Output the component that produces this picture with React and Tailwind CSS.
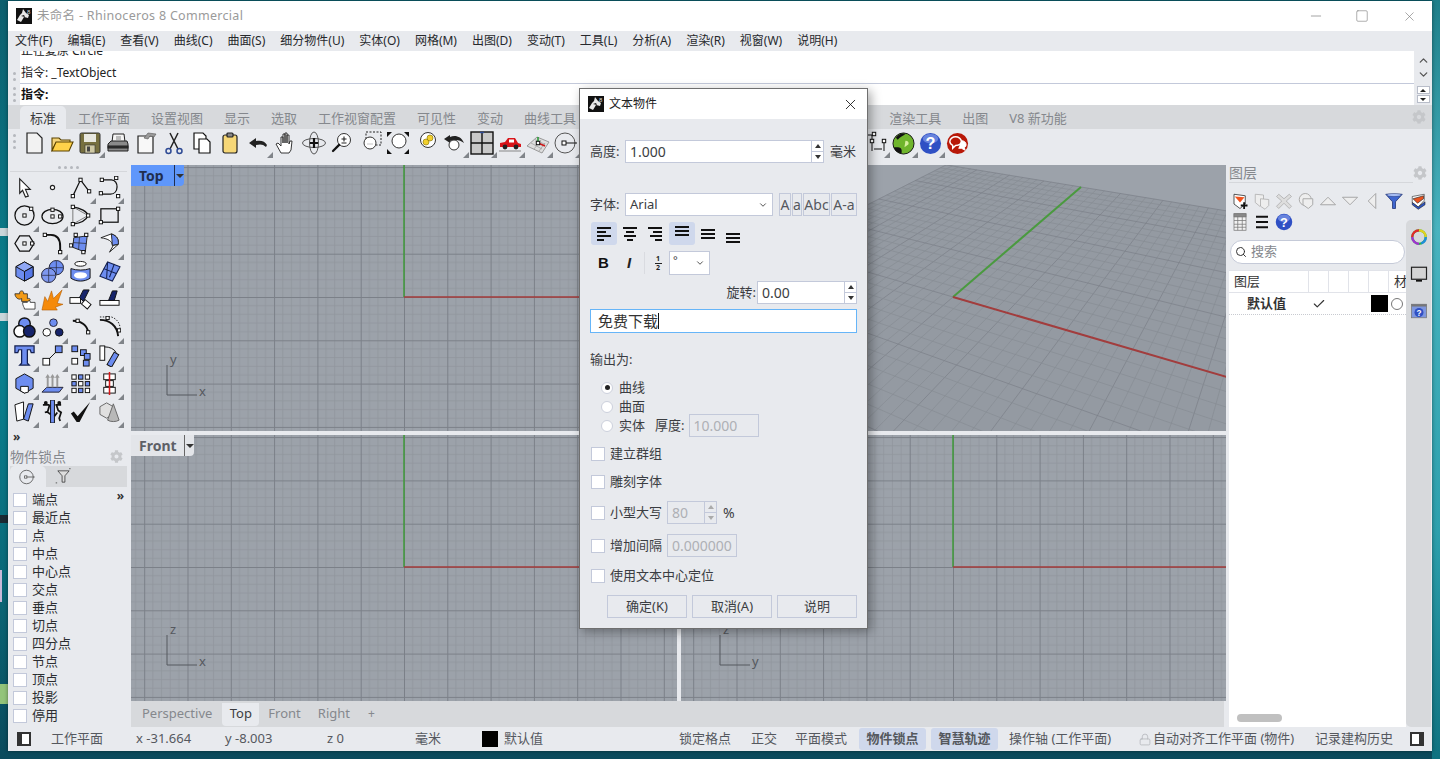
import { Check, ChevronDown, ChevronUp, Lock, Minus, Search, Square, X } from 'lucide-react';
import { FaCog } from 'react-icons/fa';

const S = { fill: 'none', stroke: '#111', strokeWidth: 1.3 };
const BLUE = '#6d8df0';
const NAVY = '#16246b';
const Pt = ({ x, y }) => <rect x={x - 1.7} y={y - 1.7} width="3.4" height="3.4" fill="#fff" stroke="#111" strokeWidth="1" />;
const Lens = ({ cx = 14, cy = 9, r = 6.5, fill = '#fff', dash }) => (
  <g>
    <circle cx={cx} cy={cy} r={r} fill={fill} stroke="#333" strokeWidth="1" strokeDasharray={dash} />
    <path d={`M${cx - r * 0.75} ${cy + r * 0.75}L${cx - r - 4.5} ${cy + r + 4.5}`} stroke="#111" strokeWidth="2.2" strokeLinecap="round" />
  </g>
);

const icons = {
  newDoc: <path d="M5 2h10l5 5v15H5z" fill="#f2f2f2" stroke="#222" strokeWidth="1.2" />,
  open: (
    <g stroke="#5a4300" strokeWidth="1.1">
      <path d="M2 19V7h7l2 2h9v3H6z" fill="#f3d37a" />
      <path d="M2 20l4-9h17l-4 9z" fill="#ffd24a" />
    </g>
  ),
  save: (
    <g>
      <rect x="2" y="2" width="20" height="20" rx="1.5" fill="#77703f" stroke="#333" />
      <rect x="6" y="3" width="12" height="8" fill="#e8e8e0" />
      <rect x="7" y="14" width="10" height="8" fill="#cfc9a4" stroke="#333" strokeWidth=".6" />
      <rect x="9" y="15.5" width="3" height="5" fill="#444" />
    </g>
  ),
  print: (
    <g stroke="#222" strokeWidth="1">
      <path d="M7 3h11l1 8H6z" fill="#f4f4f4" />
      <rect x="10" y="5" width="5" height="4" fill="#bbb" stroke="none" />
      <path d="M2 13l3-3h16l1 3v7H2z" fill="#8a8a8a" />
      <rect x="2" y="15" width="20" height="2" fill="#333" />
    </g>
  ),
  docPaste: (
    <g>
      <path d="M4 5h9l6 0v17H4z" fill="#f8f8f8" stroke="#222" strokeWidth="1.2" />
      <path d="M10 7l4-5 8 1-2 3-4-1-2 3z" fill="#9a9a9a" stroke="#555" strokeWidth=".6" />
    </g>
  ),
  cut: (
    <g fill="none" strokeWidth="1.5">
      <path d="M8 2l8 16M16 2L8 18" stroke="#222" />
      <circle cx="6.5" cy="20" r="2.5" stroke="#2e4a94" />
      <circle cx="17.5" cy="20" r="2.5" stroke="#2e4a94" />
    </g>
  ),
  copy: (
    <g stroke="#111" strokeWidth="1.2" fill="#fff">
      <path d="M4 2h9l3 3v13H4z" />
      <path d="M9 8h8l3 3v11H9z" />
    </g>
  ),
  clip: (
    <g stroke="#222" strokeWidth="1.2">
      <rect x="5" y="4" width="14" height="18" rx="2" fill="#f6d777" />
      <rect x="9" y="2" width="6" height="4" rx="1" fill="#888" />
    </g>
  ),
  undo: <path d="M3 12l7-5v3c5-1 9 0 11 4l-1 2c-3-3-6-3-10-2v3z" fill="#222" />,
  hand: <path d="M7 22l-5-9 2-1 3 3V6h2v6V3h2v9V2h2v10V4h2v9l1-3h2l-1 9-2 3z" fill="#fff" stroke="#222" strokeWidth=".9" strokeLinejoin="round" />,
  rotate: (
    <g fill="none" stroke="#444" strokeWidth=".9">
      <ellipse cx="12" cy="12" rx="11.500" ry="4.500" />
      <ellipse cx="12" cy="12" rx="4.500" ry="11" />
      <path d="M12 7v10M8 12h8" stroke="#111" strokeWidth="2.200" />
    </g>
  ),
  zoomExt: (
    <g>
      <Lens />
      <path d="M14 5.500v5M11.500 8h5M11.500 12h5" stroke="#222" strokeWidth="1.100" />
    </g>
  ),
  zoomWin: (
    <g>
      <rect x="8" y="1" width="15" height="13" fill="none" stroke="#222" strokeDasharray="2 1.500" />
      <Lens cx="12" cy="12" r="6" />
      <path d="M9.500 13h5" stroke="#888" strokeDasharray="1 1" />
    </g>
  ),
  zoomAll: (
    <g>
      <Lens cx="13" cy="10" r="7" />
      <path d="M1 1h5L1 6zM23 1h-5l5 5zM23 23h-5l5-5zM1 23h5l-5-5z" fill="#111" />
    </g>
  ),
  zoomSel: (
    <g>
      <Lens cx="14" cy="9" r="7.500" />
      <circle cx="12" cy="11" r="3" fill="#f2d02c" stroke="#7c6a00" strokeWidth=".6" />
      <circle cx="16" cy="7" r="3" fill="#f2d02c" stroke="#7c6a00" strokeWidth=".6" />
    </g>
  ),
  undoView: (
    <g>
      <path d="M2 8l6-4v2c5-2 11-1 14 6-4-3-8-4-14-2v2z" fill="#222" />
      <Lens cx="12" cy="14" r="5" />
    </g>
  ),
  fourView: (
    <g stroke="#111" strokeWidth="1.400">
      <rect x="1" y="1" width="22" height="22" fill="#c9c9c9" />
      <path d="M12 1v22M1 12h22" />
      <path d="M10 1.500h4" stroke="#2e4a94" />
    </g>
  ),
  car: (
    <g>
      <path d="M2 16v-4l5-1 3-4h7l3 5 3 1v3z" fill="#d8141a" />
      <rect x="11" y="8.500" width="5" height="3" fill="#fff" />
      <circle cx="7" cy="16" r="2.400" fill="#222" />
      <circle cx="18" cy="16" r="2.400" fill="#222" />
      <path d="M1 20h22" stroke="#888" />
    </g>
  ),
  cplane: (
    <g>
      <path d="M1 15L11 6l12 5-7 11z" fill="#ddd" stroke="#999" />
      <path d="M5 12l11 6M9 8.500l10 5M8 18l7-9M13 20l6-8" stroke="#999" strokeWidth=".7" />
      <path d="M12 12V6" stroke="#2c9a3a" strokeWidth="1.600" />
      <path d="M12 12l7 3" stroke="#d01818" strokeWidth="1.600" />
      <Pt x={12} y={12} />
    </g>
  ),
  osnap: (
    <g fill="none" stroke="#555" strokeWidth="1">
      <circle cx="11" cy="12" r="10" />
      <path d="M10 12h13" stroke="#111" />
      <rect x="8" y="10" width="4" height="4" fill="#fff" stroke="#111" />
    </g>
  ),
  dim: (
    <g fill="none" stroke="#111" strokeWidth="1">
      <path d="M2 4h7M7 4v16M19 12v8M9 18h8" />
      <Pt x={9} y={3} />
      <Pt x={7} y={10} />
      <Pt x={19} y={10} />
    </g>
  ),
  globe: (
    <g>
      <circle cx="12" cy="12" r="11" fill="#6fb52c" stroke="#111" />
      <path d="M2 16c5 0 9-1 8 6-4 0-7-2-8-6zM4 6c3-4 7-5 10-4-2 2-6 3-8 6z" fill="#111" />
      <path d="M14 9c3 0 4 2 3 4l-4 3z" fill="#d6ee9e" />
    </g>
  ),
  help: (
    <g>
      <circle cx="12" cy="12" r="11" fill="#2f50c4" />
      <ellipse cx="12" cy="7" rx="8" ry="5" fill="#8ea5ee" opacity=".6" />
      <text x="12" y="18" textAnchor="middle" fontSize="17" fontWeight="700" fill="#fff" fontFamily="Liberation Sans, sans-serif">?</text>
    </g>
  ),
  chat: (
    <g>
      <circle cx="12" cy="12" r="11" fill="#b81808" />
      <path d="M4 10c0-3 3-5 6-5s6 2 6 5-3 4-6 4l-3 3v-3c-2-1-3-2-3-4z" fill="none" stroke="#fff" strokeWidth="1.500" />
      <path d="M16 9c3 0 5 2 5 4s-1 3-2 3l1 3-4-2h-3" fill="#fff" stroke="#fff" />
    </g>
  ),
  // left panel
  cursor: <path d="M7 3l11 11h-5l3 7-3 1-3-7-3 3z" fill="#fff" stroke="#222" strokeWidth="1.200" />,
  point: <circle cx="12" cy="12" r="2.200" fill="#fff" stroke="#222" strokeWidth="1.200" />,
  polyline: (
    <g>
      <path d="M4 21L12 4l9 12" {...S} />
      <Pt x={4} y={21} />
      <Pt x={12} y={4} />
      <Pt x={21} y={16} />
    </g>
  ),
  curve: (
    <g>
      <path d="M4 4h10c8 0 8 15-1 15H4" {...S} />
      <Pt x={4} y={4} />
      <Pt x={19} y={2} />
      <Pt x={3} y={18} />
      <Pt x={21} y={21} />
    </g>
  ),
  circle: (
    <g>
      <circle cx="12" cy="12" r="10" {...S} />
      <Pt x={12} y={12} />
      <Pt x={19} y={5} />
    </g>
  ),
  ellipse: (
    <g>
      <ellipse cx="12" cy="13" rx="11" ry="7.500" {...S} />
      <Pt x={12} y={13} />
      <Pt x={12} y={6} />
      <Pt x={20} y={13} />
    </g>
  ),
  arc3: (
    <g>
      <path d="M4 3c8 1 15 5 16 9-2 5-8 8-16 9" {...S} />
      <path d="M4 3v18l16-9z" fill="none" stroke="#777" />
      <Pt x={4} y={3} />
      <Pt x={4} y={21} />
      <Pt x={20} y={12} />
    </g>
  ),
  rect: (
    <g>
      <rect x="3" y="5" width="18" height="14" {...S} />
      <Pt x={21} y={5} />
      <Pt x={3} y={19} />
    </g>
  ),
  hexagon: (
    <g>
      <path d="M7 4h10l5 8-5 8H7l-5-8z" {...S} />
      <Pt x={12} y={12} />
      <Pt x={20} y={12} />
    </g>
  ),
  fillet: (
    <g>
      <path d="M5 3h9M20 20V11" stroke="#777" fill="none" />
      <path d="M4 3h6c7 0 10 5 10 12v6" fill="none" stroke="#111" strokeWidth="2" />
      <Pt x={4} y={3} />
      <Pt x={20} y={21} />
    </g>
  ),
  patch: (
    <g>
      <path d="M5 6l14-2-2 17-13-5z" fill={BLUE} stroke="#222" />
      <path d="M11 5l-1 13M4 11l14 1" stroke="#222" strokeWidth=".7" />
      <Pt x={7} y={3} />
      <Pt x={18} y={3} />
      <Pt x={2} y={14} />
      <Pt x={15} y={21} />
    </g>
  ),
  blend: (
    <g stroke="#222">
      <path d="M3 6l11-4c6 2 8 6 7 11l-6 1c0-4-4-7-12-8z" fill="#fff" />
      <path d="M14 2c6 2 8 6 7 11l-6 1c0-4-1-8-1-12z" fill={BLUE} />
      <path d="M12 21l9-8v-0l-5 1z" fill="#fff" />
    </g>
  ),
  cube: (
    <g stroke="#111">
      <path d="M3 7l9-5 9 5v10l-9 5-9-5z" fill={BLUE} />
      <path d="M3 7l9 5 9-5-9-5z" fill="#90a8f5" />
      <path d="M12 12l9-5v10l-9 5z" fill="#5577e6" />
    </g>
  ),
  spheres: (
    <g stroke="#223">
      <circle cx="16" cy="8" r="7.500" fill={BLUE} />
      <circle cx="8" cy="16" r="7.500" fill="#7e97ee" />
      <path d="M1 16h14M8 9v14M9 8h14M16 1v14" strokeWidth=".7" />
    </g>
  ),
  cylinder: (
    <g stroke="#111">
      <ellipse cx="12" cy="4" rx="6" ry="2.500" fill="#fff" />
      <path d="M2 9c6 2 14 2 20 0v10c-6 4-14 4-20 0z" fill={BLUE} />
      <ellipse cx="12" cy="16" rx="6" ry="2.500" fill="#fff" stroke="#fff" strokeWidth="1.500" />
    </g>
  ),
  mesh: (
    <g stroke="#14204f" strokeWidth="1.100">
      <path d="M2 17L10 2l13 5-8 15z" fill={BLUE} />
      <path d="M6 9l13 5M10 2l-1 17M17 4l-5 14" fill="none" />
    </g>
  ),
  puzzle: (
    <g stroke="#222" strokeWidth=".8">
      <path d="M2 6h5c-1-4 5-4 4 0h4v5c4-1 4 3 0 3H9v-3c-3 2-7-1-7-5z" fill="#f29a15" />
      <path d="M10 15h5c0-2 4-2 3 0h5v7H12c0-2-2-3-2-7z" fill="#fff" />
    </g>
  ),
  explode: <path d="M1 23l3-14 3 5 4-11 2 8 9-9-5 14 6 1-8 3 2 3z" fill="#f58a0a" stroke="#b35a00" strokeWidth=".6" />,
  splitA: (
    <g stroke="#111">
      <rect x="1" y="10" width="11" height="6" fill="#fff" />
      <rect x="14" y="14" width="8" height="6" fill="#fff" transform="rotate(40 18 17)" />
      <path d="M11 10l4-8h6l-6 12z" fill={NAVY} />
    </g>
  ),
  splitB: (
    <g stroke="#111">
      <rect x="2" y="13" width="20" height="5" fill="#fff" />
      <path d="M11 13l4-10h5l-3 10z" fill={NAVY} />
    </g>
  ),
  threeB: (
    <g stroke="#111" strokeWidth="1.500">
      <circle cx="12" cy="8" r="6" fill={BLUE} />
      <circle cx="7" cy="16" r="6" fill="#fff" />
      <circle cx="17" cy="16" r="6" fill={NAVY} />
    </g>
  ),
  threeC: (
    <g stroke="#111">
      <circle cx="13" cy="7" r="4" fill={BLUE} stroke="#223" />
      <circle cx="6" cy="17" r="4" fill="#fff" />
      <circle cx="19" cy="17" r="4" fill={NAVY} />
    </g>
  ),
  arcB: (
    <g>
      <path d="M4 5c9 0 15 5 16 12" fill="none" stroke="#111" strokeWidth="2" />
      <Pt x={9} y={5} />
      <Pt x={20} y={17} />
    </g>
  ),
  arcC: (
    <g>
      <path d="M2 4c10 0 18 6 19 17" fill="none" stroke="#111" strokeWidth="2" />
      <path d="M2 1h12c6 2 9 7 9 12" fill="none" stroke="#222" strokeDasharray="1.500 1.500" />
      <Pt x={10} y={2} />
      <Pt x={22} y={15} />
    </g>
  ),
  tee: <path d="M2 2h20v7h-3l-1-3h-3v14l2 2H7l2-2V6H6L5 9H2z" fill={BLUE} stroke="#14204f" strokeWidth="1.300" />,
  move: (
    <g stroke="#111">
      <rect x="2" y="15" width="7" height="7" fill="#fff" />
      <rect x="15" y="2" width="7" height="7" fill={BLUE} />
      <path d="M9 15l6-6" />
    </g>
  ),
  arrayCopy: (
    <g stroke="#111">
      <rect x="3" y="2" width="6" height="6" fill={BLUE} />
      <rect x="12" y="6" width="6" height="6" fill={BLUE} />
      <rect x="3" y="15" width="6" height="6" fill="#fff" />
      <rect x="16" y="10" width="6" height="6" fill={BLUE} />
      <rect x="15" y="17" width="6" height="6" fill={BLUE} />
    </g>
  ),
  rotateBox: (
    <g stroke="#111">
      <rect x="2" y="2" width="5" height="15" fill="#fff" />
      <path d="M7 3c5 0 10 2 12 6" fill="none" />
      <rect x="13" y="9" width="5.500" height="15" fill={BLUE} transform="rotate(30 16 16)" />
    </g>
  ),
  cubeCut: (
    <g stroke="#111">
      <path d="M3 7l9-5 9 5v10l-9 5-9-5z" fill={BLUE} />
      <path d="M8 15h8v6l-4 1-4-2z" fill="#fff" />
    </g>
  ),
  extrude: (
    <g>
      <path d="M1 21l5-5h17l-4 5z" fill={BLUE} stroke="#223" />
      <path d="M7 16V5M12 16V5M17 16V5" stroke="#999" strokeWidth="2" />
      <path d="M4.500 6L7 2l2.500 4zM9.500 6L12 2l2.500 4zM14.500 6L17 2l2.500 4z" fill="#999" />
    </g>
  ),
  gridArr: (
    <g stroke="#111" fill="#fff">
      {[3, 10, 17].flatMap((y) => [3, 10, 17].map((x) => <rect key={`${x}${y}`} x={x} y={y} width="4.500" height="4.500" fill={(x + y) % 2 ? BLUE : '#fff'} />))}
    </g>
  ),
  stack: (
    <g stroke="#111">
      <rect x="6" y="2" width="12" height="6" fill="#fff" />
      <rect x="8" y="9" width="8" height="6" fill="#fff" />
      <rect x="6" y="16" width="12" height="6" fill="#fff" />
      <path d="M12 0v24" stroke="#d6181a" strokeWidth="1.600" />
    </g>
  ),
  book: (
    <g stroke="#111">
      <path d="M2 5l9-3v18l-7 2z" fill="#fff" />
      <path d="M11 20l5-16h5l-5 18z" fill={BLUE} />
    </g>
  ),
  mirror: (
    <g>
      <rect x="10" y="0" width="4" height="24" fill={BLUE} stroke="#111" />
      <path d="M2 5h7M9 5l-2 7-3 1M6 12l4 3M15 5h6M16 5l2 6 3 2-2 6 1 3M17 13l-3 4" fill="none" stroke="#111" strokeWidth="1.800" />
      <circle cx="5" cy="3" r="2" fill="#111" />
      <circle cx="19" cy="3" r="2" fill="#111" />
    </g>
  ),
  tick: <path d="M2 14l3-2 4 5L22 2l-11 21h-3z" fill="#111" />,
  cone: (
    <g stroke="#666">
      <path d="M2 7l7-4 7 4v8l-7 4-7-4z" fill="#e0e0e0" />
      <path d="M16 4l6 17c-3 2-9 2-12 0z" fill="#b8b8b8" />
    </g>
  ),
  // layer panel
  layerNew: (
    <g>
      <path d="M4 3l15 2v11l-7 6-8-6z" fill="#fff" stroke="#222" />
      <path d="M5 6l13 1-6 7z" fill="#f0531e" />
      <path d="M13 18h9M17.500 13.500v9" stroke="#111" strokeWidth="2.400" />
    </g>
  ),
  layerDup: (
    <g fill="#eee" stroke="#aaa">
      <path d="M3 3l11 1v9l-5 6-6-5z" />
      <path d="M10 9l11 1v8l-5 5-6-4z" />
    </g>
  ),
  delete: <path d="M5 3l7 6 7-6 3 3-7 6 7 7-3 3-7-7-7 7-3-3 7-7-7-6z" fill="#ddd" stroke="#aaa" />,
  layerCopy: (
    <g fill="#eee" stroke="#aaa" strokeWidth="1.300">
      <circle cx="11" cy="10" r="8" />
      <path d="M8 9h13v8l-6 5-7-5z" />
    </g>
  ),
  up: <path d="M2 17L12 7l10 10z" fill="#eee" stroke="#999" strokeWidth="1.100" />,
  down: <path d="M2 7l10 10L22 7z" fill="#eee" stroke="#999" strokeWidth="1.100" />,
  left: <path d="M17 2L7 12l10 10z" fill="#eee" stroke="#999" strokeWidth="1.100" />,
  funnel: (
    <g>
      <path d="M1 3h22l-9 10v9h-4v-9z" fill="#3f66cf" stroke="#1c2f70" />
      <ellipse cx="12" cy="4" rx="10" ry="2" fill="#a9bff5" stroke="#1c2f70" strokeWidth=".6" />
    </g>
  ),
  layers: (
    <g stroke="#222" strokeWidth=".8">
      <path d="M3 6l16-3v8l-8 9-8-6z" fill="#fff" />
      <path d="M4 9l14-4v4l-8 6z" fill="#e8531f" />
      <path d="M3 14l8 6 9-7v4l-9 6-8-6z" fill="#2d56c7" />
    </g>
  ),
  table: (
    <g stroke="#777" fill="#f2f2f2">
      <rect x="4" y="1" width="16" height="22" />
      <path d="M4 5h16M4 10h16M4 15h16M4 19h16M9 1v22M15 1v22" fill="none" />
      <rect x="4" y="1" width="16" height="4" fill="#888" />
    </g>
  ),
  menu: <path d="M4 5h16M4 12h16M4 19h16" stroke="#111" strokeWidth="2.600" />,
  wheel: (
    <g fill="none" strokeWidth="3">
      <circle cx="12" cy="12" r="9" stroke="#2bb24a" />
      <path d="M12 3a9 9 0 0 1 9 9" stroke="#e3d21e" />
      <path d="M3 12a9 9 0 0 1 9-9" stroke="#e5272a" />
      <path d="M12 21a9 9 0 0 1-9-9" stroke="#a22fd1" />
      <path d="M21 12a9 9 0 0 1-6 8.500" stroke="#1f8ddc" />
    </g>
  ),
  monitor: (
    <g>
      <rect x="2" y="3" width="20" height="16" fill="#d4d4d4" stroke="#222" strokeWidth="1.600" />
      <path d="M8 21h8" stroke="#111" strokeWidth="2.400" />
    </g>
  ),
  helpPane: (
    <g>
      <rect x="2" y="3" width="20" height="18" fill="#7f97de" stroke="#777" />
      <rect x="2" y="3" width="20" height="3" fill="#777" />
      <circle cx="12" cy="14" r="6" fill="#2f50c4" />
      <text x="12" y="18" textAnchor="middle" fontSize="11" fontWeight="700" fill="#fff" fontFamily="Liberation Sans, sans-serif">?</text>
    </g>
  ),
  target: (
    <g fill="none" stroke="#444">
      <circle cx="10" cy="12" r="9" />
      <path d="M9 12h12" />
      <rect x="7.500" y="10.500" width="3" height="3" fill="#fff" />
    </g>
  ),
  funnelDots: (
    <g>
      <path d="M4 4h16l-6 7v9h-4v-9z" fill="#ddd" stroke="#222" />
      <path d="M20 1l2 0M1 21h2" stroke="#222" />
    </g>
  ),
};

const Icon = ({ name, size = 24, flag, className = '' }) => (
  <span className={`relative flex items-center justify-center ${className}`}>
    <svg width={size} height={size} viewBox="0 0 24 24">{icons[name]}</svg>
    {flag && <span className="absolute right-[-1px] bottom-[-3px] border-b-[6px] border-l-[6px] border-b-[#808489] border-l-transparent" />}
  </span>
);

const HandleDots = ({ count }) => (
  <div className="flex w-[12px] shrink-0 flex-col items-center justify-end gap-[3px] pb-[3px]">
    {Array.from({ length: count }, (_, i) => <span key={i} className="h-[3px] w-[3px] rounded-full bg-[#b5b8bd]" />)}
  </div>
);

const mainTools = [
  ['newDoc'], ['open'], ['save', 1], ['print'], ['docPaste'], ['cut'], ['copy'], ['clip'], ['undo', 1], ['hand'],
  ['rotate'], ['zoomExt'], ['zoomWin'], ['zoomAll'], ['zoomSel'], ['undoView', 1], ['fourView', 1], ['car', 1], ['cplane', 1], ['osnap', 1],
];

const sideTools = [
  ['cursor'], ['point'], ['polyline', 1], ['curve', 1],
  ['circle', 1], ['ellipse', 1], ['arc3', 1], ['rect', 1],
  ['hexagon', 1], ['fillet', 1], ['patch', 1], ['blend', 1],
  ['cube', 1], ['spheres', 1], ['cylinder', 1], ['mesh', 1],
  ['puzzle', 1], ['explode'], ['splitA'], ['splitB'],
  ['threeB', 1], ['threeC', 1], ['arcB', 1], ['arcC', 1],
  ['tee', 1], ['move', 1], ['arrayCopy', 1], ['rotateBox', 1],
  ['cubeCut', 1], ['extrude', 1], ['gridArr', 1], ['stack', 1],
  ['book', 1], ['mirror', 1], ['tick'], ['cone', 1],
];

const menus = ['文件(F)', '编辑(E)', '查看(V)', '曲线(C)', '曲面(S)', '细分物件(U)', '实体(O)', '网格(M)', '出图(D)', '变动(T)', '工具(L)', '分析(A)', '渲染(R)', '视窗(W)', '说明(H)'];
const tabs = ['工作平面', '设置视图', '显示', '选取', '工作视窗配置', '可见性', '变动', '曲线工具', '曲面工具', '细分工具', '网格工具', '实体工具', '渲染工具', '出图', 'V8 新功能'];
const snaps = ['端点', '最近点', '点', '中点', '中心点', '交点', '垂点', '切点', '四分点', '节点', '顶点', '投影', '停用'];

function project(X, Y) {
  const w = 1 - 0.002 * X + 0.005 * Y;
  return [
    (0.13 * X + 6.685 * Y + 953) / w - 681,
    (0.002 * X - 0.165 * Y + 297) / w - 165,
  ].map((n) => n.toFixed(1));
}

const Xs = Array.from({ length: 51 }, (_, i) => -100 + i * 5);
const Ys = Array.from({ length: 41 }, (_, i) => -100 + i * 5);

function FlatGrid({ id, ox, oy, children }) {
  return (
    <svg className="absolute inset-0" width="546" height="266">
      <defs>
        <pattern id={id} width="43.3" height="43.3" patternUnits="userSpaceOnUse" patternTransform={`translate(${ox} ${oy})`}>
          <path d="M8.66 0V43.3M17.32 0V43.3M25.98 0V43.3M34.64 0V43.3M0 8.66H43.3M0 17.32H43.3M0 25.98H43.3M0 34.64H43.3" stroke="#90959d" strokeWidth=".8" />
          <path d="M.5 0V43.3M0 .5H43.3" stroke="#7b8088" strokeWidth="1" />
        </pattern>
      </defs>
      <rect width="546" height="266" fill={`url(#${id})`} />
      {children}
    </svg>
  );
}

function AxisMark({ x, y, a, b }) {
  return (
    <g>
      <path d={`M${x} ${y - 30}V${y}H${x + 30}`} fill="none" stroke="#55585e" />
      <text x={x + 3} y={y - 31} fontSize="13" fill="#55585e" fontFamily="Noto Sans, sans-serif">{b}</text>
      <text x={x + 32} y={y + 1} fontSize="13" fill="#55585e" fontFamily="Noto Sans, sans-serif">{a}</text>
    </g>
  );
}

function ViewLabel({ name, active, w }) {
  return (
    <div className={`absolute top-0 left-0 flex h-[21px] items-center justify-between rounded-br-[4px] pl-[8px] text-[14px] font-bold ${active ? 'bg-[#5f97fb] text-[#1f2e4f]' : 'bg-[#e3e5e9] text-[#5d6066]'} ${w}`}>
      {name}
      <span className={`flex h-full w-[10px] items-center justify-center border-l ${active ? 'border-l-[#1f2e4f]' : 'border-l-[#666]'}`}>
        <span className="border-x-[4px] border-t-[4px] border-x-transparent border-t-[#333]" />
      </span>
    </div>
  );
}

function Perspective() {
  const corners = [project(-100, 100), project(150, 100), project(150, -100), project(-100, -100)];
  return (
    <svg className="absolute inset-0" width="546" height="266">
      <polygon points={corners.map((c) => c.join(',')).join(' ')} fill="#949aa2" />
      {Xs.map((x) => {
        const [a, b] = [project(x, -100), project(x, 100)];
        return <line key={x} x1={a[0]} y1={a[1]} x2={b[0]} y2={b[1]} stroke={x % 25 ? '#878c94' : '#7b8088'} strokeWidth=".7" />;
      })}
      {Ys.map((y) => {
        const [a, b] = [project(-100, y), project(150, y)];
        return <line key={y} x1={a[0]} y1={a[1]} x2={b[0]} y2={b[1]} stroke={y % 25 ? '#878c94' : '#7b8088'} strokeWidth=".7" />;
      })}
      <line x1="272" y1="132" x2="400" y2="22" stroke="#4a9a3f" strokeWidth="2" />
      <line x1="272" y1="132" x2="546" y2="212" stroke="#a23d3d" strokeWidth="2" />
    </svg>
  );
}

const Spin = ({ muted }) => (
  <span className="flex h-full w-[12px] flex-col border-l border-l-[#c3c9da]">
    <span className="flex flex-1 items-center justify-center border-b border-b-[#c3c9da]">
      <span className={`border-x-[3.5px] border-b-[4px] border-x-transparent ${muted ? 'border-b-[#aaa]' : 'border-b-[#333]'}`} />
    </span>
    <span className="flex flex-1 items-center justify-center">
      <span className={`border-x-[3.5px] border-t-[4px] border-x-transparent ${muted ? 'border-t-[#aaa]' : 'border-t-[#333]'}`} />
    </span>
  </span>
);

const Box = ({ className = '', children }) => (
  <div className={`flex items-center border border-[#c3c9da] ${className}`}>{children}</div>
);

const CheckRow = ({ label, tall, children }) => (
  <div className={`flex items-center ${tall ? 'h-[23px]' : 'h-[18px]'}`}>
    <span className="h-[14px] w-[14px] border border-[#c3c9da] bg-white" />
    <span className="ml-[5px]">{label}</span>
    {children}
  </div>
);

const Radio = ({ on, label, children }) => (
  <div className="flex h-[19px] items-center pl-[11px]">
    <span className="flex h-[12px] w-[12px] items-center justify-center rounded-full border border-[#ccd0dc] bg-white">
      {on && <span className="h-[5px] w-[5px] rounded-full bg-[#222]" />}
    </span>
    <span className="ml-[6px]">{label}</span>
    {children}
  </div>
);

const AlignGlyph = ({ rows, align = 'items-center' }) => (
  <span className={`flex w-[14px] flex-col gap-[2px] ${align}`}>
    {rows.map((w, i) => <span key={i} className="h-[2px] bg-[#111]" style={{ width: w }} />)}
  </span>
);

const Logo = () => (
  <svg width="16" height="16" viewBox="0 0 16 16" className="shrink-0">
    <rect width="16" height="16" fill="#111" />
    <path d="M1 12l3-5 2-2 1-4 3 4 3 2-1 3-4-1-3 5z" fill="#e8e8e8" />
    <path d="M5 8l3-1 1 2z" fill="#111" />
    <text x="11" y="6" fontSize="6" fill="#ddd" fontFamily="Liberation Sans, sans-serif">8</text>
  </svg>
);

function TextDialog() {
  return (
    <div className="absolute top-[88px] left-[579px] flex h-[541px] w-[289px] flex-col border border-[#6f6f6f] bg-[#e8eaee] text-[13px] text-[#3b3d42] shadow-[3px_3px_10px_rgba(0,0,0,0.35)]">
      <div className="flex h-[30px] items-center bg-white pr-[8px] pl-[8px] text-[#222]">
        <Logo />
        <span className="ml-[5px] flex-1 text-[12px]">文本物件</span>
        <X size={17} strokeWidth={1.2} color="#111" />
      </div>
      <div className="flex flex-col px-[10px]">
        <div className="mt-[21px] flex h-[23px] items-center">
          <span className="w-[35px]">高度:</span>
          <Box className="h-full w-[199px] bg-white">
            <span className="flex-1 pl-[4px] text-[14px]">1.000</span>
            <Spin />
          </Box>
          <span className="ml-[6px]">毫米</span>
        </div>
        <div className="mt-[30px] flex h-[23px] items-center">
          <span className="w-[35px]">字体:</span>
          <Box className="h-full w-[148px] bg-white">
            <span className="flex-1 pl-[4px] text-[13px]">Arial</span>
            <ChevronDown size={10} className="mr-[4px]" color="#333" />
          </Box>
          <div className="ml-[6px] flex h-full text-[14px] text-[#55585e]">
            <Box className="w-[12px] justify-center">A</Box>
            <Box className="ml-[1px] w-[10px] justify-center">a</Box>
            <Box className="ml-[1px] w-[27px] justify-center">Abc</Box>
            <Box className="ml-[1px] w-[26px] justify-center">A-a</Box>
          </div>
        </div>
        <div className="mt-[6px] flex h-[23px] items-stretch pl-[1px]">
          <span className="flex w-[26px] items-center justify-center rounded-[3px] bg-[#cfd8ec]"><AlignGlyph rows={[14, 9, 14, 7]} align="items-start" /></span>
          <span className="flex w-[25px] items-center justify-center"><AlignGlyph rows={[14, 8, 12, 6]} /></span>
          <span className="flex w-[25px] items-center justify-center"><AlignGlyph rows={[14, 9, 12, 7]} align="items-end" /></span>
          <span className="ml-[2px] flex w-[26px] items-start justify-center rounded-[3px] bg-[#cfd8ec] pt-[4px]"><AlignGlyph rows={[14, 14, 14]} /></span>
          <span className="flex w-[25px] items-center justify-center"><AlignGlyph rows={[14, 14, 14]} /></span>
          <span className="flex w-[25px] items-end justify-center pb-[2px]"><AlignGlyph rows={[14, 14, 14]} /></span>
        </div>
        <div className="mt-[6px] flex h-[24px] items-center">
          <span className="ml-[8px] w-[20px] text-[15px] font-bold text-[#111] [font-family:'Liberation_Sans',sans-serif]">B</span>
          <span className="ml-[9px] w-[12px] text-[15px] font-bold text-[#222] italic [font-family:'Liberation_Sans',sans-serif]">I</span>
          <span className="ml-[5px] h-[22px] border-l border-l-[#d9dbe0]" />
          <span className="ml-[8px] flex w-[10px] flex-col items-center text-[7px] leading-[8px] font-bold text-[#222]">
            <span>1</span>
            <span className="h-px w-[7px] bg-[#222]" />
            <span>2</span>
          </span>
          <Box className="ml-[6px] h-full w-[41px] bg-white">
            <span className="flex-1 self-start pl-[3px] text-[11px]">°</span>
            <ChevronDown size={10} className="mr-[4px]" color="#333" />
          </Box>
        </div>
        <div className="mt-[6px] flex h-[23px] items-center justify-end">
          <span className="mr-[1px]">旋转:</span>
          <Box className="h-full w-[100px] bg-white">
            <span className="flex-1 pl-[4px] text-[14px]">0.00</span>
            <Spin />
          </Box>
        </div>
        <div className="mt-[5px] flex h-[24px] items-center border border-[#66b5f8] bg-white pl-[7px] text-[15px] text-[#333]">
          免费下载<span className="h-[16px] w-px bg-[#111]" />
        </div>
        <div className="mt-[17px] h-[18px] leading-[18px]">输出为:</div>
        <div className="mt-[10px] flex flex-col">
          <Radio on label="曲线" />
          <Radio label="曲面" />
          <Radio label="实体">
            <span className="ml-[10px]">厚度:</span>
            <Box className="ml-[4px] h-[23px] w-[70px] pl-[4px] text-[14px] text-[#aeb0b5]">10.000</Box>
          </Radio>
        </div>
        <div className="mt-[10px] pl-[1px]"><CheckRow label="建立群组" /></div>
        <div className="mt-[10px] pl-[1px]"><CheckRow label="雕刻字体" /></div>
        <div className="mt-[10px] pl-[1px]">
          <CheckRow label="小型大写" tall>
            <Box className="ml-[5px] h-[23px] w-[50px] text-[14px] text-[#aeb0b5]">
              <span className="flex-1 pl-[4px]">80</span>
              <Spin muted />
            </Box>
            <span className="ml-[6px] text-[14px]">%</span>
          </CheckRow>
        </div>
        <div className="mt-[10px] pl-[1px]">
          <CheckRow label="增加间隔" tall>
            <Box className="ml-[5px] h-[23px] w-[70px] pl-[4px] text-[14px] text-[#aeb0b5]">0.000000</Box>
          </CheckRow>
        </div>
        <div className="mt-[10px] pl-[1px]"><CheckRow label="使用文本中心定位" /></div>
        <div className="mt-[10px] flex h-[23px] justify-end gap-[5px]">
          {['确定(K)', '取消(A)', '说明'].map((t) => (
            <Box key={t} className="w-[80px] justify-center">{t}</Box>
          ))}
        </div>
      </div>
    </div>
  );
}

export default function App() {
  return (
    <div className="relative h-[759px] w-[1440px] overflow-hidden bg-[linear-gradient(180deg,#0c5f6e,#0a8391_45%,#0a6a7a_75%,#0b4a5c)] [font-family:'Noto_Sans','Noto_Sans_CJK_SC',sans-serif]">
      <div className="absolute top-0 right-0 h-full w-[8px] bg-[linear-gradient(180deg,#1f7f8a,#49b3bf_30%,#2da0ad_70%,#0f7280)]" />
      <div className="absolute top-[228px] left-0 h-[8px] w-[8px] bg-[#c9d6da]" />
      <div className="absolute top-[313px] left-0 h-[8px] w-[8px] bg-[#c9d6da]" />
      <div className="absolute top-[515px] left-0 h-[8px] w-[8px] bg-[#1b2a33]" />
      <div className="absolute top-[570px] left-0 h-[32px] w-[2px] bg-[#c9b8d8]" />
      <div className="absolute top-[684px] left-0 h-[20px] w-[8px] bg-[#93c47a]" />

      <div className="absolute top-[1px] left-[8px] flex h-[750px] w-[1424px] flex-col bg-[#e8eaee] shadow-[0_0_4px_rgba(0,0,0,0.45)]">
        <div className="flex h-[30px] shrink-0 items-center bg-white pl-[8px] text-[12.5px] text-[#9a9a9a]">
          <Logo />
          <span className="ml-[5px] flex-1 tracking-[0.3px]">未命名 - Rhinoceros 8 Commercial</span>
          <Minus size={16} strokeWidth={1} color="#777" className="mr-[31px]" />
          <Square size={14} strokeWidth={1} color="#777" className="mr-[33px]" />
          <X size={15} strokeWidth={1} color="#777" className="mr-[15px]" />
        </div>
        <div className="flex h-[20px] shrink-0 items-center gap-[15px] pl-[7px] text-[12px] text-[#26282c]">
          {menus.map((m) => <span key={m}>{m}</span>)}
        </div>
        <div className="flex h-[33px] shrink-0">
          <HandleDots count={2} />
          <div className="relative h-full flex-1 overflow-hidden border-b border-b-[#c3c9da] bg-white pl-[1px] text-[12px] text-[#222]">
            <div className="absolute top-[-9px] left-[1px]">正在复原 Circle</div>
            <div className="absolute top-[13px] left-[1px]">指令: _TextObject</div>
          </div>
          <div className="flex w-[18px] flex-col items-center justify-center gap-[1px]">
            <ChevronUp size={13} strokeWidth={2.4} color="#555" />
            <ChevronDown size={13} strokeWidth={2.4} color="#555" />
          </div>
        </div>
        <div className="flex h-[21px] shrink-0">
          <HandleDots count={3} />
          <div className="flex flex-1 items-center bg-white pl-[1px] text-[12px] font-bold text-[#111]">指令:</div>
          <div className="flex w-[18px] flex-col items-center justify-center gap-[1px]">
            <span className="flex h-[8px] w-[13px] items-center justify-center border border-[#b8bdc9] bg-white"><span className="border-x-[3px] border-b-[3px] border-x-transparent border-b-[#222]" /></span>
            <span className="flex h-[8px] w-[13px] items-center justify-center border border-[#b8bdc9] bg-white"><span className="border-x-[3px] border-t-[3px] border-x-transparent border-t-[#222]" /></span>
          </div>
        </div>
        <div className="flex h-[24px] shrink-0 items-end bg-[#d7d9dc] pl-[12px] text-[13px] text-[#85888d]">
          <span className="flex h-[23px] w-[46px] items-center justify-center rounded-t-[5px] bg-[#e8eaee] pt-[2px] text-[#3a3c40]">标准</span>
          <div className="flex h-full flex-1 items-center gap-[21px] pt-[3px] pl-[12px]">
            {tabs.map((t) => <span key={t} className="whitespace-nowrap">{t}</span>)}
          </div>
          <FaCog size={14} color="#c5c7ca" className="mr-[6px] mb-[5px]" />
        </div>
        <div className="flex h-[32px] shrink-0 items-center pb-[4px]">
          <HandleDots count={3} />
          {mainTools.map(([n, f]) => <Icon key={n} name={n} flag={f} className="w-[28px]" />)}
          <Icon name="dim" flag className="ml-[284px] w-[25px]" />
          <Icon name="globe" flag size={23} className="w-[28px]" />
          <Icon name="help" flag size={23} className="w-[27px]" />
          <Icon name="chat" size={23} className="w-[27px]" />
        </div>

        <div className="flex min-h-0 flex-1 pt-[2px]">
          <div className="flex w-[121px] shrink-0 flex-col pl-[2px]">
            <div className="flex h-[281px] w-[117px] shrink-0 flex-col rounded-t-[6px] bg-[#e8eaee]">
              <div className="flex h-[9px] items-center justify-center gap-[3px] border-b border-b-[#d5d7db] pt-[1px]">
                {[0, 1, 2, 3].map((i) => <span key={i} className="h-[3px] w-[3px] rounded-full bg-[#b5b8bd]" />)}
              </div>
              <div className="grid grid-cols-[repeat(4,28.3px)] auto-rows-[28px] pt-[1px]">
                {sideTools.map(([n, f]) => <Icon key={n} name={n} flag={f} size={23} />)}
              </div>
              <div className="mt-[7px] pl-[3px] text-[12px] leading-[10px] font-bold text-[#333]">»</div>
            </div>
            <div className="mt-[2px] flex w-[117px] flex-1 flex-col rounded-t-[6px] bg-[#e8eaee]">
              <div className="flex h-[20px] shrink-0 items-center justify-between pr-[4px] text-[14px] text-[#85888d]">
                物件锁点
                <FaCog size={13} color="#c5c7ca" />
              </div>
              <div className="flex h-[21px] shrink-0 bg-[#d7d9dc]">
                <span className="flex w-[36px] items-center justify-center rounded-t-[5px] bg-[#e8eaee]"><Icon name="target" size={18} /></span>
                <span className="flex w-[34px] items-center justify-center"><Icon name="funnelDots" size={17} /></span>
              </div>
              <div className="relative flex flex-col pt-[4px] pl-[3px] text-[13px] text-[#2c2e32]">
                <span className="absolute top-[0px] right-[3px] text-[12px] font-bold text-[#333]">»</span>
                {snaps.map((s) => (
                  <div key={s} className="flex h-[18px] items-center">
                    <span className="h-[14px] w-[14px] border border-[#c3c9da] bg-white" />
                    <span className="ml-[5px]">{s}</span>
                  </div>
                ))}
              </div>
            </div>
          </div>

          <div className="flex w-[1095px] shrink-0 flex-col pl-[2px]">
            <div className="grid h-[538px] shrink-0 grid-cols-[546px_545px] grid-rows-[266px_266px] gap-[4px] pt-[2px]">
              <div className="relative overflow-hidden bg-[#9ca2aa]">
                <FlatGrid id="gTop" ox={273} oy={132}>
                  <line x1="273" y1="0" x2="273" y2="132" stroke="#3f9a3a" strokeWidth="1.5" />
                  <line x1="273" y1="132" x2="546" y2="132" stroke="#a33a3a" strokeWidth="1.5" />
                  <AxisMark x={36} y={230} a="x" b="y" />
                </FlatGrid>
                <ViewLabel name="Top" active w="w-[53px]" />
              </div>
              <div className="relative overflow-hidden bg-[#9ca2aa]">
                <Perspective />
              </div>
              <div className="relative overflow-hidden bg-[#9ca2aa]">
                <FlatGrid id="gFront" ox={273} oy={132}>
                  <line x1="273" y1="0" x2="273" y2="132" stroke="#3f9a3a" strokeWidth="1.5" />
                  <line x1="273" y1="132" x2="546" y2="132" stroke="#a33a3a" strokeWidth="1.5" />
                  <AxisMark x={36} y={230} a="x" b="z" />
                </FlatGrid>
                <ViewLabel name="Front" w="w-[63px]" />
              </div>
              <div className="relative overflow-hidden bg-[#9ca2aa]">
                <FlatGrid id="gRight" ox={272} oy={132}>
                  <line x1="272" y1="0" x2="272" y2="132" stroke="#3f9a3a" strokeWidth="1.5" />
                  <line x1="272" y1="132" x2="546" y2="132" stroke="#a33a3a" strokeWidth="1.5" />
                  <AxisMark x={39} y={230} a="y" b="z" />
                </FlatGrid>
              </div>
            </div>
            <div className="flex h-[26px] shrink-0 items-center bg-[#d7d9dc] pl-[11px] text-[13px] text-[#85888d]">
              <span>Perspective</span>
              <span className="ml-[10px] flex h-[23px] w-[37px] items-center justify-center rounded-b-[4px] bg-[#e8eaee] text-[#3a3c40]">Top</span>
              <span className="ml-[9px]">Front</span>
              <span className="ml-[17px]">Right</span>
              <span className="ml-[18px] text-[12px]">+</span>
            </div>
          </div>

          <div className="flex w-[208px] shrink-0 flex-col pl-[5px]">
            <div className="relative flex h-[48px] shrink-0 flex-col">
              <div className="flex h-[20px] w-[184px] shrink-0 items-center border-b border-b-[#d5d7db] text-[14px] text-[#85888d]">图层</div>
              <FaCog size={14} color="#c5c7ca" className="absolute top-[3px] right-[5px]" />
              <div className="flex h-[28px] items-center pt-[8px]">
                {['layerNew', 'layerDup', 'delete', 'layerCopy', 'up', 'down', 'left', 'funnel'].map((n) => (
                  <Icon key={n} name={n} size={18} className="w-[22px]" />
                ))}
                <Icon name="layers" size={18} className="ml-[3px] w-[22px]" />
              </div>
            </div>
            <div className="flex min-h-0 flex-1">
              <div className="flex w-[177px] shrink-0 flex-col">
                <div className="flex h-[22px] shrink-0 items-center">
                  {['table', 'menu', 'help'].map((n) => <Icon key={n} name={n} size={18} className="w-[22px]" />)}
                </div>
                <div className="flex h-[37px] shrink-0 items-center pl-[1px]">
                  <div className="flex h-[24px] w-[175px] items-center rounded-full border border-[#c5cad8] bg-white pl-[4px] text-[13px] text-[#85888d]">
                    <Search size={12} color="#333" className="mr-[4px]" />
                    搜索
                  </div>
                </div>
                <div className="flex min-h-0 flex-1 flex-col bg-white text-[13px] text-[#333]">
                  <div className="flex h-[23px] shrink-0 border-y border-y-[#e1e3e9]">
                    <span className="flex w-[79px] items-center pl-[5px]">图层</span>
                    <span className="w-[20px] border-l border-l-[#e1e3e9]" />
                    <span className="w-[20px] border-l border-l-[#e1e3e9]" />
                    <span className="w-[20px] border-l border-l-[#e1e3e9]" />
                    <span className="w-[20px] border-l border-l-[#e1e3e9]" />
                    <span className="flex flex-1 items-center overflow-hidden border-l border-l-[#e1e3e9] pl-[5px]">材</span>
                  </div>
                  <div className="flex h-[22px] shrink-0 items-center border-b border-dotted border-b-[#c8cad0]">
                    <span className="w-[80px] pl-[18px] font-bold">默认值</span>
                    <Check size={14} color="#333" className="ml-[3px]" />
                    <span className="ml-[45px] h-[17px] w-[17px] bg-black" />
                    <span className="ml-[3px] h-[12px] w-[12px] rounded-full border border-[#777]" />
                  </div>
                  <div className="flex flex-1 items-end pb-[5px] pl-[8px]">
                    <span className="h-[8px] w-[45px] rounded-full bg-[#c0c0c0]" />
                  </div>
                </div>
              </div>
              <div className="mt-[9px] flex w-[25px] shrink-0 flex-col items-center gap-[19px] rounded-l-[5px] bg-[#d7d9dc] pt-[8px]">
                <Icon name="wheel" size={18} />
                <Icon name="monitor" size={18} />
                <Icon name="helpPane" size={18} />
              </div>
            </div>
          </div>
        </div>

        <div className="flex h-[24px] shrink-0 items-center text-[13px] text-[#55585e]">
          <span className="ml-[9px] h-[14px] w-[14px] border-[2.5px] border-[#333] bg-white [border-left-width:5px]" />
          <span className="ml-[20px] w-[85px]">工作平面</span>
          <span className="w-[89px]">x -31.664</span>
          <span className="w-[102px]">y -8.003</span>
          <span className="w-[88px]">z 0</span>
          <span className="w-[67px]">毫米</span>
          <span className="h-[16px] w-[16px] bg-black" />
          <span className="ml-[6px] w-[175px]">默认值</span>
          <span className="w-[72px]">锁定格点</span>
          <span className="w-[44px]">正交</span>
          <span className="w-[64px]">平面模式</span>
          <span className="flex h-[22px] w-[67px] items-center justify-center rounded-[3px] bg-[#cfd8ec] font-bold">物件锁点</span>
          <span className="ml-[5px] flex h-[22px] w-[67px] items-center justify-center rounded-[3px] bg-[#cfd8ec] font-bold">智慧轨迹</span>
          <span className="ml-[11px] w-[128px] whitespace-nowrap">操作轴 (工作平面)</span>
          <Lock size={13} strokeWidth={1.5} color="#b5b8bd" className="w-[16px]" />
          <span className="w-[162px] whitespace-nowrap">自动对齐工作平面 (物件)</span>
          <span className="w-[95px]">记录建构历史</span>
          <span className="h-[14px] w-[14px] border-[2.5px] border-[#333] bg-white [border-right-width:5px]" />
        </div>
      </div>

      <TextDialog />
    </div>
  );
}
